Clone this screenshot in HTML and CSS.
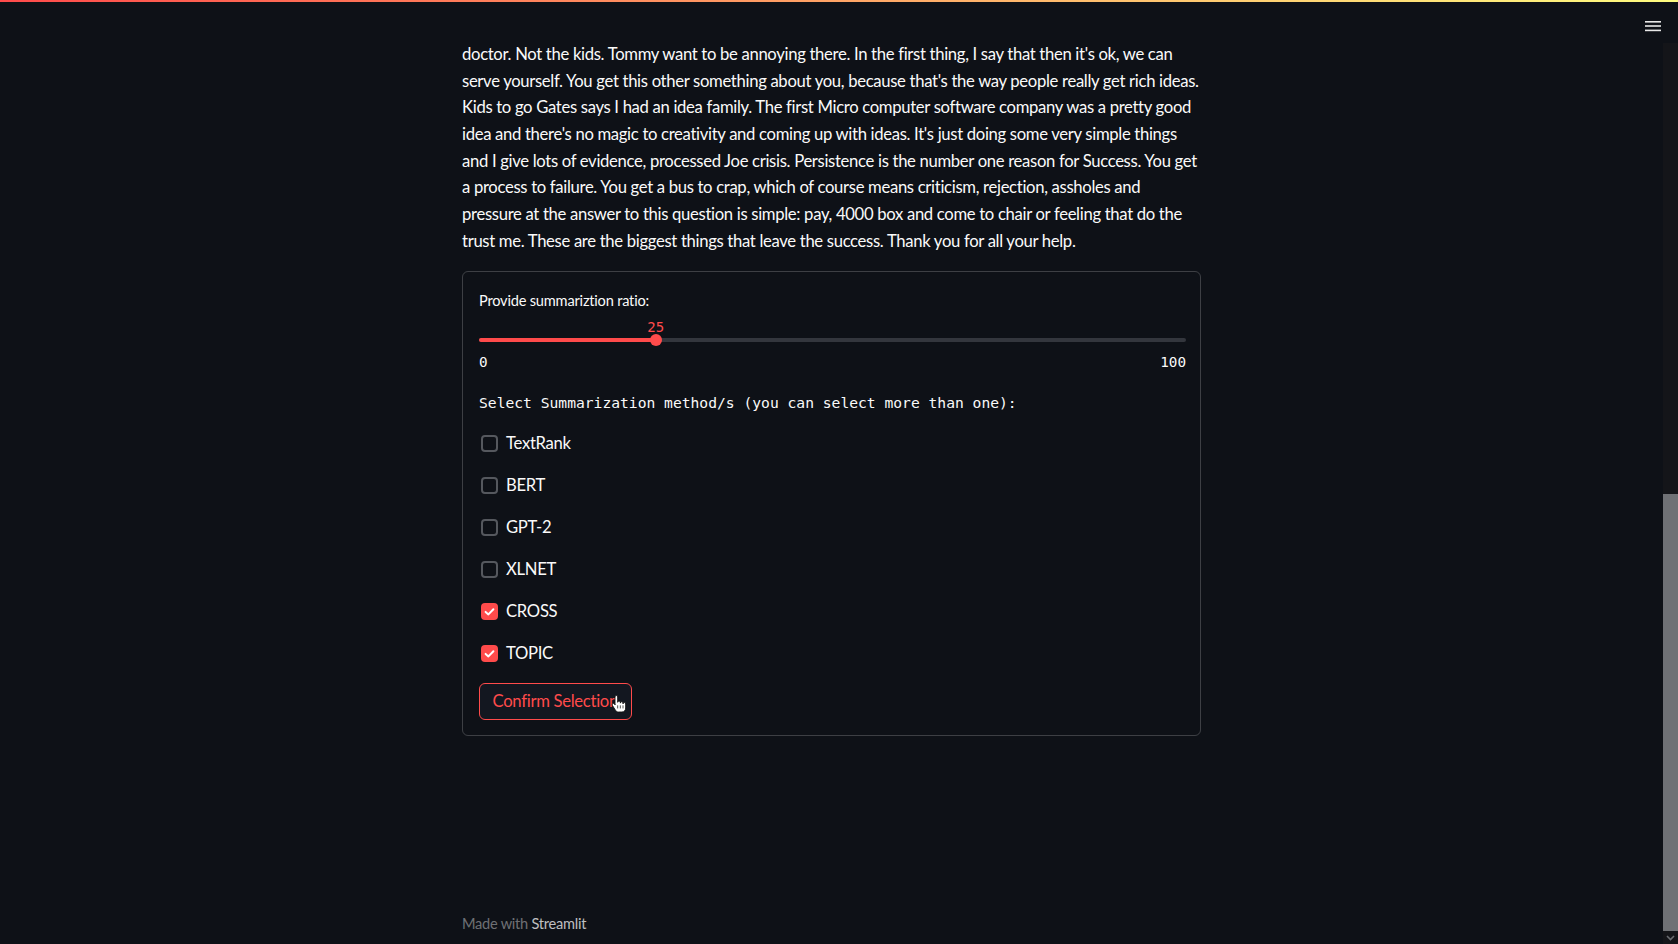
FILE: index.html
```html
<!DOCTYPE html>
<html lang="en">
<head>
<meta charset="utf-8">
<title>Summarizer</title>
<link rel="stylesheet" href="styles.css">
</head>
<body>
<div class="decoration"></div>
<div class="app">
  <main class="main">
    <div class="block">
      <p class="summary">doctor. Not the kids. Tommy want to be annoying there. In the first thing, I say that then it's ok, we can<br>serve yourself. You get this other something about you, because that's the way people really get rich ideas.<br>Kids to go Gates says I had an idea family. The first Micro computer software company was a pretty good<br>idea and there's no magic to creativity and coming up with ideas. It's just doing some very simple things<br>and I give lots of evidence, processed Joe crisis. Persistence is the number one reason for Success. You get<br>a process to failure. You get a bus to crap, which of course means criticism, rejection, assholes and<br>pressure at the answer to this question is simple: pay, 4000 box and come to chair or feeling that do the<br>trust me. These are the biggest things that leave the success. Thank you for all your help.</p>
      <div class="card">
        <div class="widget-label">Provide summariztion ratio:</div>
        <div class="slider">
          <div class="slider-value-row"><span class="slider-value" style="left:25%">25</span></div>
          <div class="track">
            <div class="fill" style="width:25%"></div>
            <div class="thumb" style="left:25%"></div>
          </div>
          <div class="ticks"><span>0</span><span>100</span></div>
        </div>
        <div class="mono-text">Select Summarization method/s (you can select more than one):</div>
        <div class="checks">
          <div class="check"><span class="box"></span><span class="check-label">TextRank</span></div>
          <div class="check"><span class="box"></span><span class="check-label">BERT</span></div>
          <div class="check"><span class="box"></span><span class="check-label">GPT-2</span></div>
          <div class="check"><span class="box"></span><span class="check-label">XLNET</span></div>
          <div class="check"><span class="box checked"><svg viewBox="0 0 17 17" width="17" height="17"><path d="M4.6 8.9 L7.4 11.4 L12.4 6.2" fill="none" stroke="#ffffff" stroke-width="2" stroke-linecap="round" stroke-linejoin="round"/></svg></span><span class="check-label">CROSS</span></div>
          <div class="check"><span class="box checked"><svg viewBox="0 0 17 17" width="17" height="17"><path d="M4.6 8.9 L7.4 11.4 L12.4 6.2" fill="none" stroke="#ffffff" stroke-width="2" stroke-linecap="round" stroke-linejoin="round"/></svg></span><span class="check-label">TOPIC</span></div>
        </div>
        <button class="btn">Confirm Selection<svg class="cursor" viewBox="0 0 18 21" width="16" height="20"><path d="M4.5 2.5 a1.5 1.5 0 0 1 3 0 V8.6 a1.5 1.5 0 0 1 3 0 V9.5 a1.5 1.5 0 0 1 3 0 V10.4 a1.5 1.5 0 0 1 3 0 V15 c0 2.6-1.6 4.5-4.2 4.5 H8.4 c-1.5 0-2.6-.8-3.4-2 L1.7 12.3 c-.6-.9-.3-1.9.5-2.3 .7-.4 1.6-.1 2.1.6 L4.5 11.6 Z" fill="#ffffff" stroke="#111111" stroke-width="1" stroke-linejoin="round"/><path d="M7.5 12 V15.5 M10.5 12 V15.5 M13.5 12 V15.5" stroke="#111111" stroke-width="0.8"/></svg></button>
      </div>
    </div>
    <footer class="footer">Made with <span class="brand">Streamlit</span></footer>
  </main>
  <div class="scrollbar">
    <div class="sb-top"></div>
    <div class="sb-track"></div>
    <div class="sb-thumb"></div>
    <div class="sb-arrow"><svg viewBox="0 0 15 13" width="15" height="13"><path d="M4 5 L7.5 8.5 L11 5" fill="none" stroke="#6a6c71" stroke-width="1.6"/></svg></div>
  </div>
</div>
<div class="menu"><svg viewBox="0 0 16 11" width="16" height="11"><rect x="0" y="0" width="16" height="1.6" fill="#e8e8e8"/><rect x="0" y="4.2" width="16" height="1.6" fill="#e8e8e8"/><rect x="0" y="8.6" width="16" height="1.6" fill="#e8e8e8"/></svg></div>
</body>
</html>
```
FILE: styles.css
```css
* { box-sizing: border-box; }
html, body {
  margin: 0;
  height: 100%;
  overflow: hidden;
  background: #0e1117;
}
body {
  font-family: "Lato", "Noto Sans", sans-serif;
  color: #fafafa;
  display: flex;
  flex-direction: column;
}
.decoration {
  flex: none;
  height: 2px;
  background: linear-gradient(90deg, #ff4b4b, #fffd80);
}
.app {
  flex: 1;
  display: flex;
  min-height: 0;
}
.main {
  flex: 1;
  display: flex;
  flex-direction: column;
  align-items: center;
  padding-top: 39px;
}
.block {
  width: 739px;
}
.summary {
  margin: 0 0 17px;
  font-size: 16.67px;
  line-height: 26.67px;
  letter-spacing: -0.32px;
  white-space: nowrap;
}
.card {
  border: 1px solid rgba(250, 250, 250, 0.2);
  border-radius: 6px;
  padding: 16px 14px 15px 16px;
}
.widget-label {
  height: 26px;
  line-height: 26px;
  font-size: 14.6px;
  letter-spacing: -0.2px;
}
.slider-value-row {
  position: relative;
  height: 24px;
}
.slider-value {
  position: absolute;
  top: 0;
  transform: translateX(-50%);
  line-height: 26px;
  font-family: "DejaVu Sans Mono", "Liberation Mono", monospace;
  font-size: 14px;
  color: #ff4b4b;
}
.track {
  position: relative;
  height: 4px;
  border-radius: 2px;
  background: #33363d;
}
.fill {
  height: 100%;
  border-radius: 2px;
  background: #ff4b4b;
}
.thumb {
  position: absolute;
  top: 50%;
  width: 12px;
  height: 12px;
  border-radius: 50%;
  background: #ff4b4b;
  transform: translate(-50%, -50%);
}
.ticks {
  display: flex;
  justify-content: space-between;
  margin-top: 10px;
  height: 20px;
  line-height: 20px;
  font-family: "DejaVu Sans Mono", "Liberation Mono", monospace;
  font-size: 14.3px;
}
.mono-text {
  margin-top: 19px;
  height: 24px;
  line-height: 24px;
  font-family: "DejaVu Sans Mono", "Liberation Mono", monospace;
  font-size: 14.65px;
}
.checks {
  margin-top: 7px;
  display: flex;
  flex-direction: column;
}
.check {
  height: 41.95px;
  display: flex;
  align-items: center;
  gap: 8px;
  padding-left: 2px;
}
.box {
  width: 17px;
  height: 17px;
  border-radius: 4px;
  border: 2px solid #55585e;
  display: flex;
  align-items: center;
  justify-content: center;
}
.box.checked {
  border: none;
  background: #ff4b4b;
}
.check-label {
  font-size: 16.67px;
  line-height: 24px;
  letter-spacing: -0.3px;
}
.btn {
  position: relative;
  margin-top: 8.5px;
  height: 37.5px;
  padding: 0 12.5px;
  border: 1px solid #ff4b4b;
  border-radius: 6px;
  background: #131720;
  color: #ff4b4b;
  font-family: "Lato", "Noto Sans", sans-serif;
  font-size: 16.67px;
  line-height: 24px;
  letter-spacing: -0.3px;
}
.cursor {
  position: absolute;
  left: 131px;
  top: 10px;
}
.footer {
  width: 739px;
  margin-top: auto;
  padding-bottom: 10px;
  line-height: 20px;
  font-size: 14.6px;
  letter-spacing: -0.25px;
  color: rgba(250, 250, 250, 0.42);
}
.brand {
  color: rgba(250, 250, 250, 0.75);
}
.scrollbar {
  flex: none;
  width: 15px;
  display: flex;
  flex-direction: column;
}
.sb-top {
  height: 41px;
}
.sb-track {
  height: 451px;
  background: #141519;
}
.sb-thumb {
  flex: 1;
  background: #6f7175;
}
.sb-arrow {
  height: 13px;
  background: #141519;
  display: flex;
}
.menu {
  position: absolute;
  top: 21px;
  right: 17px;
  line-height: 0;
}
```
